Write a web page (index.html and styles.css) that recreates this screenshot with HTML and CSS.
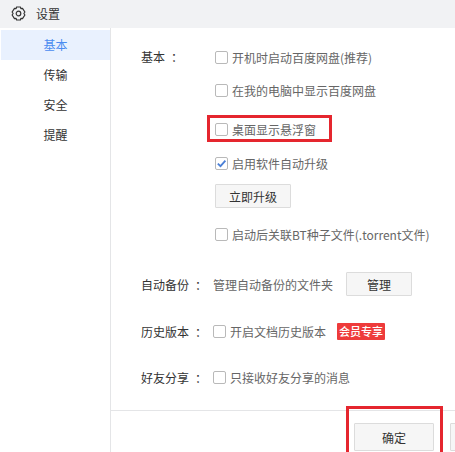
FILE: index.html
```html
<!DOCTYPE html>
<html lang="zh-CN">
<head>
  <meta charset="UTF-8" />
  <title>设置</title>
  <link rel="stylesheet" href="styles.css">
</head>
<body>
  <div class="window">
    <header class="title-bar">
      <svg class="gear" width="15" height="15" viewBox="0 0 15 15" fill="none" stroke="#333" stroke-width="1.2">
        <path d="M5.6 1 H9.4 L9.9 2.6 L11.5 2.3 L13.9 6 L12.9 7.5 L13.9 9 L11.5 12.7 L9.9 12.4 L9.4 14 H5.6 L5.1 12.4 L3.5 12.7 L1.1 9 L2.1 7.5 L1.1 6 L3.5 2.3 L5.1 2.6 Z" stroke-linejoin="round" />
        <circle cx="7.5" cy="7.5" r="2.3" />
      </svg>
      <span>设置</span>
    </header>

    <div class="main">
      <nav class="side">
        <div class="side-item active">基本</div>
        <div class="side-item">传输</div>
        <div class="side-item">安全</div>
        <div class="side-item">提醒</div>
      </nav>

      <div class="panel">
        <section class="group group-basic">
          <div class="group-label">基本<span class="colon">：</span></div>
          <div class="options">
            <label class="check"><i class="box"></i>开机时启动百度网盘(推荐)</label>
            <label class="check"><i class="box"></i>在我的电脑中显示百度网盘</label>
            <label class="check check-floating"><i class="box"></i>桌面显示悬浮窗</label>
            <label class="check check-upgrade">
              <i class="box">
                <svg width="13" height="13" viewBox="0 0 13 13" fill="none" stroke="#4a7fd6" stroke-width="1.8"><path d="M2.8 6.6 L5.5 9.2 L10.4 3.6" /></svg>
              </i>启用软件自动升级
            </label>
            <button class="btn btn-upgrade">立即升级</button>
            <label class="check check-bt"><i class="box"></i>启动后关联BT种子文件(.torrent文件)</label>
          </div>
        </section>

        <section class="group group-backup">
          <div class="group-label">自动备份<span class="colon">：</span></div>
          <span class="plain">管理自动备份的文件夹</span>
          <button class="btn btn-manage">管理</button>
        </section>

        <section class="group group-history">
          <div class="group-label">历史版本<span class="colon">：</span></div>
          <label class="check"><i class="box"></i>开启文档历史版本</label>
          <span class="badge">会员专享</span>
        </section>

        <section class="group group-share">
          <div class="group-label">好友分享<span class="colon">：</span></div>
          <label class="check"><i class="box"></i>只接收好友分享的消息</label>
        </section>

        <footer class="actions">
          <button class="btn btn-ok">确定</button>
          <button class="btn btn-cancel"></button>
        </footer>
      </div>
    </div>

    <!-- red marks drawn on top of the screenshot -->
    <div class="mark mark-floating"></div>
    <div class="mark mark-ok"></div>
  </div>
</body>
</html>
```

FILE: styles.css
```css
:root {
  --text: #666;
  --label: #333;
  --line: #e4e5e7;
  --mark: #e5262e;
}

* {
  box-sizing: border-box;
}

body {
  margin: 0;
  background: #fff;
  font-family: "Noto Sans CJK SC", "Liberation Sans", sans-serif;
  font-size: 12px;
  color: var(--text);
}

.window {
  position: relative;
  width: 455px;
  height: 452px;
  overflow: hidden;
}

.title-bar {
  display: flex;
  align-items: center;
  gap: 10px;
  height: 28px;
  padding: 0 0 2px 11px;
  background: #f1f2f4;
  color: var(--label);
}

.main {
  display: flex;
  height: 424px;
}

.side {
  flex: none;
  width: 111px;
  padding: 2px 0 0 1px;
  border-right: 1px solid var(--line);
}

.side-item {
  height: 30px;
  line-height: 30px;
  text-align: center;
  color: var(--label);
}

.side-item.active {
  background: #e9f1fe;
  color: #4a8cf0;
}

.panel {
  flex: 1;
  min-width: 0;
  display: flex;
  flex-direction: column;
}

.group {
  display: flex;
  align-items: center;
  padding-left: 30px;
}

.group-label {
  width: 74px;
  flex: none;
  color: var(--label);
}

.colon {
  margin-left: 6px;
}

.group-basic {
  align-items: flex-start;
  padding-top: 20px;
}

.group-basic .group-label {
  line-height: 18px;
}

.options {
  display: flex;
  flex-direction: column;
  align-items: flex-start;
}

.check {
  display: flex;
  align-items: center;
  height: 18px;
  white-space: nowrap;
}

.options .check {
  margin-bottom: 15px;
}

.options .check-floating {
  margin-top: 6px;
  margin-bottom: 16px;
}

.options .check-upgrade {
  margin-bottom: 12px;
}

.options .check-bt {
  margin: 17px 0 0;
}

.box {
  display: flex;
  flex: none;
  width: 13px;
  height: 13px;
  margin-right: 4px;
  border: 1px solid #b9b9b9;
  border-radius: 2px;
  background: #fff;
}

.box svg {
  margin: -1px;
}

.btn {
  padding: 0;
  border: 1px solid #dcdcdc;
  border-radius: 1px;
  background: #f6f6f6;
  font: inherit;
  color: var(--label);
}

.btn-upgrade {
  width: 76px;
  height: 24px;
}

.group-backup {
  margin-top: 29px;
}

.plain {
  margin-left: -2px;
  margin-right: 13px;
}

.btn-manage {
  width: 66px;
  height: 24px;
}

.group-history {
  margin-top: 23px;
  height: 24px;
}

.group-history .check,
.group-share .check {
  margin-left: -2px;
}

.badge {
  margin-left: 11px;
  width: 48px;
  height: 17px;
  line-height: 17px;
  text-align: center;
  background: #ee3b3b;
  color: #fff;
  font-weight: 500;
  font-size: 11px;
  border-radius: 1px;
}

.group-share {
  margin-top: 22px;
  height: 24px;
}

.actions {
  display: flex;
  gap: 16px;
  margin-top: 21px;
  height: 42px;
  padding: 12px 0 0 243px;
  border-top: 1px solid var(--line);
}

.btn-ok,
.btn-cancel {
  flex: none;
  width: 80px;
  height: 28px;
}

.mark {
  position: absolute;
  border: 3px solid var(--mark);
}

.mark-floating {
  left: 207px;
  top: 115px;
  width: 125px;
  height: 27px;
}

.mark-ok {
  left: 346px;
  top: 406px;
  width: 97px;
  height: 50px;
}
```
